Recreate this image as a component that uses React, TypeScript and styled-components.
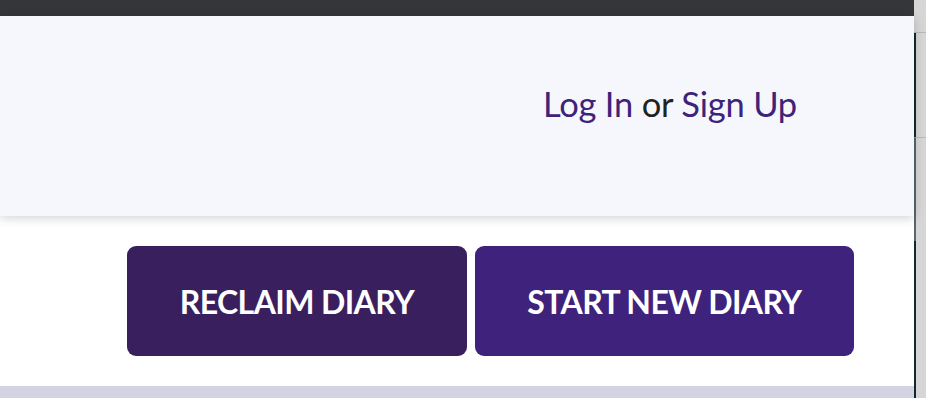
import React from "react";
import styled, { createGlobalStyle } from "styled-components";

const Global = createGlobalStyle`
  html, body { margin: 0; padding: 0; background: #ffffff; overflow: hidden; }
  body { font-family: "Lato", "Open Sans", sans-serif; }
`;

const Frame = styled.div`
  display: flex;
  width: 926px;
  height: 398px;
  overflow: hidden;
`;

const Main = styled.div`
  flex: 0 0 914px;
  display: flex;
  flex-direction: column;
  background: #ffffff;
`;

const TopBar = styled.div`
  height: 16px;
  background: #35363a;
`;

const Header = styled.header`
  position: relative;
  z-index: 1;
  box-sizing: border-box;
  height: 200px;
  background: #f6f7fc;
  box-shadow: 0 2px 10px rgba(0, 0, 0, 0.18);
  display: flex;
  align-items: center;
  justify-content: flex-end;
  padding: 0 117px 26px 0;
  font-size: 34.5px;
  color: #222222;
`;

const AuthText = styled.div`
  white-space: nowrap;
  letter-spacing: -0.2px;
`;

const AuthLink = styled.a`
  color: #3d2379;
  text-decoration: none;
`;

const Actions = styled.div`
  display: flex;
  justify-content: flex-end;
  gap: 8px;
  padding: 30px 60px 30px 0;
`;

const ActionButton = styled.button<{ $tone: "dark" | "bright" }>`
  height: 110px;
  padding: 0 52.5px;
  border: none;
  border-radius: 9px;
  background: ${(p) => (p.$tone === "dark" ? "#3a1f5f" : "#3f227b")};
  color: #ffffff;
  font-family: "Lato", "Open Sans", sans-serif;
  font-weight: 700;
  font-size: 32px;
  letter-spacing: -0.6px;
  cursor: pointer;
`;

const BottomBar = styled.div`
  flex: 1;
  background: #d4d3e3;
`;

const ScrollTrack = styled.div`
  flex: 0 0 12px;
  display: flex;
  flex-direction: column;
  background: #d6d6d6;
`;

const TrackTop = styled.div`
  height: 32px;
  border-bottom: 1px solid #b8b8b8;
`;

const TrackBody = styled.div`
  flex: 1;
  border-left: 2px solid #0f2a2e;
  display: flex;
  flex-direction: column;
`;

const TrackSeg = styled.div<{ $h: number; $light?: boolean }>`
  height: ${(p) => p.$h}px;
  margin-left: -2px;
  border-left: 2px solid ${(p) => (p.$light ? "#56686a" : "#0f2a2e")};
  border-top: ${(p) => (p.$light ? "1px solid #b8b8b8" : "none")};
`;

export default function App() {
  return (
    <>
      <Global />
      <Frame>
        <Main>
          <TopBar />
          <Header>
            <AuthText>
              <AuthLink href="#">Log In</AuthLink> or <AuthLink href="#">Sign Up</AuthLink>
            </AuthText>
          </Header>
          <Actions>
            <ActionButton $tone="dark">RECLAIM DIARY</ActionButton>
            <ActionButton $tone="bright">START NEW DIARY</ActionButton>
          </Actions>
          <BottomBar />
        </Main>
        <ScrollTrack>
          <TrackTop />
          <TrackBody>
            <TrackSeg $h={104} />
            <TrackSeg $h={103} $light />
          </TrackBody>
        </ScrollTrack>
      </Frame>
    </>
  );
}
